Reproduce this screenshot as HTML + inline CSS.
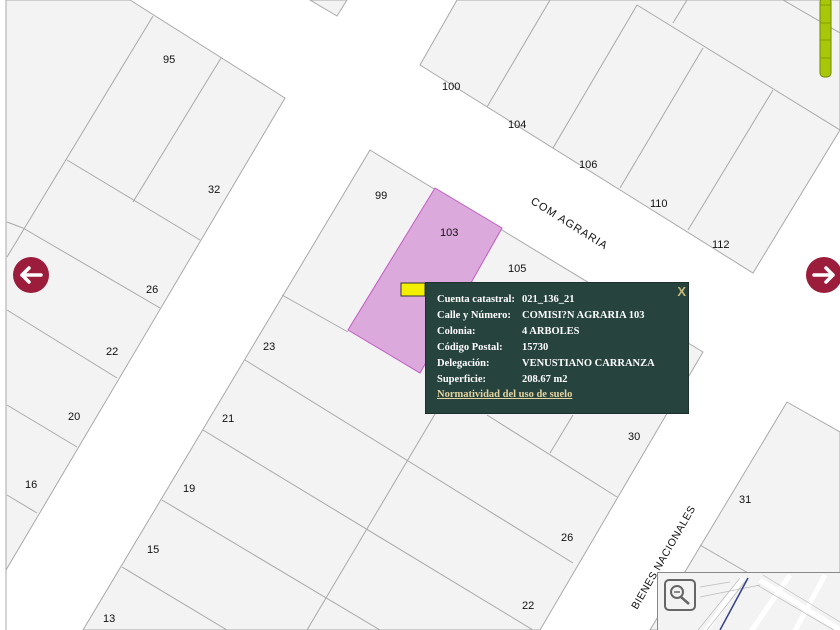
<!DOCTYPE html>
<html><head><meta charset="utf-8"><style>
html,body{margin:0;padding:0;background:#fff;width:840px;height:630px;overflow:hidden;position:relative;font-family:"Liberation Sans",sans-serif}
svg{position:absolute;left:0;top:0}
.pop{position:absolute;left:425px;top:282px;width:264px;height:132px;background:#27433d;color:#fff;font-family:"Liberation Serif",serif;font-weight:bold;font-size:10.5px;border:1px solid #1d302c;box-sizing:border-box}
.pop .r{position:absolute;left:11px;white-space:nowrap}
.pop .v{position:absolute;left:96px;white-space:nowrap}
.pop a{color:#e3d3a0;text-decoration:underline}
.x{position:absolute;right:2px;top:1px;color:#c9b97a;font-family:"Liberation Sans",sans-serif;font-weight:bold;font-size:13px}
</style></head><body>
<svg width="840" height="630" viewBox="0 0 840 630" xmlns="http://www.w3.org/2000/svg">
<g fill="#f3f3f3" stroke="#a9a9a9" stroke-width="1">
<polygon points="6,0 130,0 285,98 6,570"/>
<polygon points="310,0 347,0 337,16"/>
<polygon points="457,0 840,0 840,130 753,273 420,65"/>
<polygon points="370,150 703,352 540,630 83,630"/>
<polygon points="787,402 840,432 840,630 650,630"/>
</g>
<g stroke="#a9a9a9" stroke-width="1" fill="none">
<line x1="153" y1="16" x2="7" y2="257"/>
<line x1="221" y1="58" x2="133" y2="202"/>
<line x1="67" y1="160" x2="200" y2="240"/>
<line x1="23" y1="228" x2="160" y2="308"/>
<line x1="7" y1="222" x2="23" y2="228"/>
<line x1="7" y1="310" x2="117" y2="378"/>
<line x1="7" y1="405" x2="77" y2="447"/>
<line x1="7" y1="495" x2="37" y2="513"/>
<line x1="282" y1="295" x2="348" y2="332"/>
<line x1="245" y1="360" x2="573" y2="563"/>
<line x1="203" y1="430" x2="533" y2="630"/>
<line x1="162" y1="500" x2="380" y2="630"/>
<line x1="122" y1="567" x2="227" y2="630"/>
<line x1="487" y1="415" x2="617" y2="497"/>
<line x1="307" y1="630" x2="470" y2="355"/>
<line x1="573" y1="415" x2="550" y2="453"/>
<line x1="487" y1="107" x2="550" y2="0"/>
<line x1="553" y1="148" x2="637" y2="5"/>
<line x1="620" y1="188" x2="703" y2="48"/>
<line x1="688" y1="230" x2="773" y2="90"/>
<line x1="673" y1="23" x2="687" y2="0"/>
<line x1="637" y1="5" x2="840" y2="130"/>
<line x1="783" y1="0" x2="840" y2="33"/>
<line x1="700" y1="545" x2="760" y2="580"/>
<line x1="6" y1="0" x2="6" y2="630"/>
</g>
<polygon points="435,188 502,228 420,373 348,330" fill="#dca9dd" stroke="#c25bc4" stroke-width="1"/>
<g font-family="Liberation Sans,sans-serif" font-size="11" fill="#111">
<text x="163" y="63">95</text><text x="208" y="193">32</text><text x="146" y="293">26</text>
<text x="106" y="355">22</text><text x="68" y="420">20</text><text x="25" y="488">16</text>
<text x="375" y="199">99</text><text x="440" y="236">103</text><text x="508" y="272">105</text>
<text x="263" y="350">23</text><text x="222" y="422">21</text><text x="183" y="492">19</text>
<text x="147" y="553">15</text><text x="103" y="622">13</text>
<text x="442" y="90">100</text><text x="508" y="128">104</text><text x="579" y="168">106</text>
<text x="650" y="207">110</text><text x="712" y="248">112</text>
<text x="628" y="440">30</text><text x="739" y="503">31</text><text x="561" y="541">26</text><text x="522" y="609">22</text>
<text transform="translate(530,203) rotate(32)" letter-spacing="1">COM AGRARIA</text>
<text transform="translate(637,610) rotate(-60)" letter-spacing="0.5" font-size="10.5">BIENES NACIONALES</text>
</g>
<circle cx="31" cy="275" r="18" fill="#9c1c3c"/>
<path d="M41 275 H22 M29 268 L22 275 L29 282" stroke="#fff" stroke-width="3.5" fill="none" stroke-linecap="round" stroke-linejoin="round"/>
<circle cx="824" cy="275" r="18" fill="#9c1c3c"/>
<path d="M814 275 H833 M826 268 L833 275 L826 282" stroke="#fff" stroke-width="3.5" fill="none" stroke-linecap="round" stroke-linejoin="round"/>
<rect x="820" y="-2" width="11" height="79" rx="4" fill="#a9c70a" stroke="#6f8a00"/>
<g stroke="#7b9600" stroke-width="0.8"><line x1="820" y1="5" x2="831" y2="5"/><line x1="820" y1="23" x2="831" y2="23"/><line x1="820" y1="40" x2="831" y2="40"/><line x1="820" y1="58" x2="831" y2="58"/></g>
<rect x="401" y="283" width="24" height="13" fill="#f2f000" stroke="#333"/>
<g>
<rect x="657.5" y="572.5" width="183" height="60" fill="#f3f3f3" stroke="#888"/>
<g stroke="#fff" stroke-width="5" fill="none">
<line x1="700" y1="640" x2="742" y2="578"/>
<line x1="760" y1="580" x2="840" y2="630"/>
<line x1="790" y1="575" x2="745" y2="640"/>
<line x1="825" y1="575" x2="790" y2="640"/>
</g>
<g stroke="#bbb" stroke-width="0.7" fill="none">
<line x1="698" y1="630" x2="740" y2="578"/><line x1="707" y1="630" x2="748" y2="578"/>
<line x1="757" y1="585" x2="837" y2="632"/><line x1="763" y1="575" x2="840" y2="622"/>
<line x1="700" y1="587" x2="730" y2="582"/><line x1="700" y1="597" x2="760" y2="585"/>
</g>
<line x1="748" y1="578" x2="720" y2="630" stroke="#34408a" stroke-width="1.5"/>
<rect x="665" y="580" width="30" height="30" rx="4" fill="#f3f3f3" stroke="#666" stroke-width="2"/>
<circle cx="677" cy="592" r="6" fill="none" stroke="#666" stroke-width="2"/>
<line x1="674" y1="592" x2="680" y2="592" stroke="#666" stroke-width="1.5"/>
<line x1="681" y1="597" x2="689" y2="604" stroke="#666" stroke-width="2.5"/>
</g>
</svg>
<div class="pop">
<div class="x">X</div>
<div class="r" style="top:11px">Cuenta catastral:</div><div class="v" style="top:11px">021_136_21</div>
<div class="r" style="top:27px">Calle y Número:</div><div class="v" style="top:27px">COMISI?N AGRARIA 103</div>
<div class="r" style="top:43px">Colonia:</div><div class="v" style="top:43px">4 ARBOLES</div>
<div class="r" style="top:59px">Código Postal:</div><div class="v" style="top:59px">15730</div>
<div class="r" style="top:75px">Delegación:</div><div class="v" style="top:75px">VENUSTIANO CARRANZA</div>
<div class="r" style="top:91px">Superficie:</div><div class="v" style="top:91px">208.67 m2</div>
<div class="r" style="top:106px"><a>Normatividad del uso de suelo</a></div>
</div>
</body></html>
